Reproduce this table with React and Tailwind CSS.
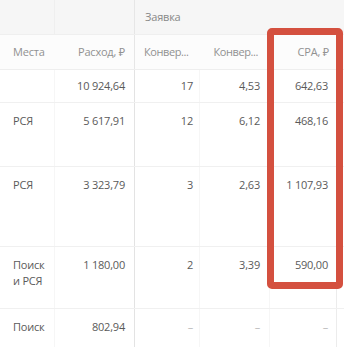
import React from "react";

// ── DATA ──
const rows = [
  { place: "", spend: "10 924,64", conv1: "17", conv2: "4,53", cpa: "642,63", h: "h-[33px]", center: true },
  { place: "РСЯ", spend: "5 617,91", conv1: "12", conv2: "6,12", cpa: "468,16", h: "h-[64px]" },
  { place: "РСЯ", spend: "3 323,79", conv1: "3", conv2: "2,63", cpa: "1 107,93", h: "h-[80px]" },
  { place: "Поиск и РСЯ", spend: "1 180,00", conv1: "2", conv2: "3,39", cpa: "590,00", h: "h-[62px]" },
  { place: "Поиск", spend: "802,94", conv1: "–", conv2: "–", cpa: "–", h: "h-[40px]" },
];

const cols = "grid grid-cols-[55px_80px_65px_70px_67px_7px]";

const App = () => {
  return (
    <div
      className="relative w-[344px] h-[347px] overflow-hidden bg-white text-[11px] text-[#5a5a5a] tracking-[-0.2px]"
      style={{ fontFamily: '"Open Sans", "Noto Sans", sans-serif' }}
    >
      {/* Header: group row */}
      <div className={`${cols} h-[35px] bg-[#f6f6f6] border-b border-[#efefef]`}>
        <div className="border-r border-[#efefef]" />
        <div className="border-r border-[#e6e6e6]" />
        <div className="col-span-4 flex items-center pl-[10px] text-[#888]">Заявка</div>
      </div>

      {/* Header: column names */}
      <div className={`${cols} h-[35px] bg-[#fcfcfc] border-b border-[#eeeeee] text-[#919191]`}>
        <div className="flex items-center pl-[13px]">Места</div>
        <div className="flex items-center justify-end pr-[9px] border-r border-[#e6e6e6]">Расход, ₽</div>
        <div className="flex items-center pl-[9px] whitespace-nowrap tracking-[-0.4px]">Конвер...</div>
        <div className="flex items-center justify-end pr-[12px] whitespace-nowrap tracking-[-0.4px]">Конвер...</div>
        <div className="flex items-center justify-end pr-[8px]">CPA, ₽</div>
        <div />
      </div>

      {/* Body */}
      {rows.map((r, i) => (
        <div key={i} className={`${cols} ${r.h} border-b border-[#f0f0f0]`}>
          <div className={`pl-[13px] pr-1 leading-[16px] border-r border-[#f6f6f6] ${r.center ? "flex items-center" : "pt-[10px]"}`}>
            {r.place}
          </div>
          <div className={`pr-[9px] text-right border-r border-[#e3e3e3] ${r.center ? "flex items-center justify-end" : "pt-[10px] leading-[16px]"}`}>
            {r.spend}
          </div>
          <div className={`pr-[6px] text-right border-r border-[#f6f6f6] ${r.center ? "flex items-center justify-end" : "pt-[10px] leading-[16px]"} ${r.conv1 === "–" ? "text-[#bbb]" : ""}`}>
            {r.conv1}
          </div>
          <div className={`pr-[9px] text-right border-r border-[#f6f6f6] ${r.center ? "flex items-center justify-end" : "pt-[10px] leading-[16px]"} ${r.conv2 === "–" ? "text-[#bbb]" : ""}`}>
            {r.conv2}
          </div>
          <div className={`pr-[8px] text-right border-r border-[#ececec] ${r.center ? "flex items-center justify-end" : "pt-[10px] leading-[16px]"} ${r.cpa === "–" ? "text-[#bbb]" : ""}`}>
            {r.cpa}
          </div>
          <div />
        </div>
      ))}

      {/* Highlight box over CPA column */}
      <div className="absolute left-[267px] top-[28px] w-[76px] h-[261px] border-[7px] border-[#d4503f] rounded-[5px] pointer-events-none" />
    </div>
  );
};

export default App;
